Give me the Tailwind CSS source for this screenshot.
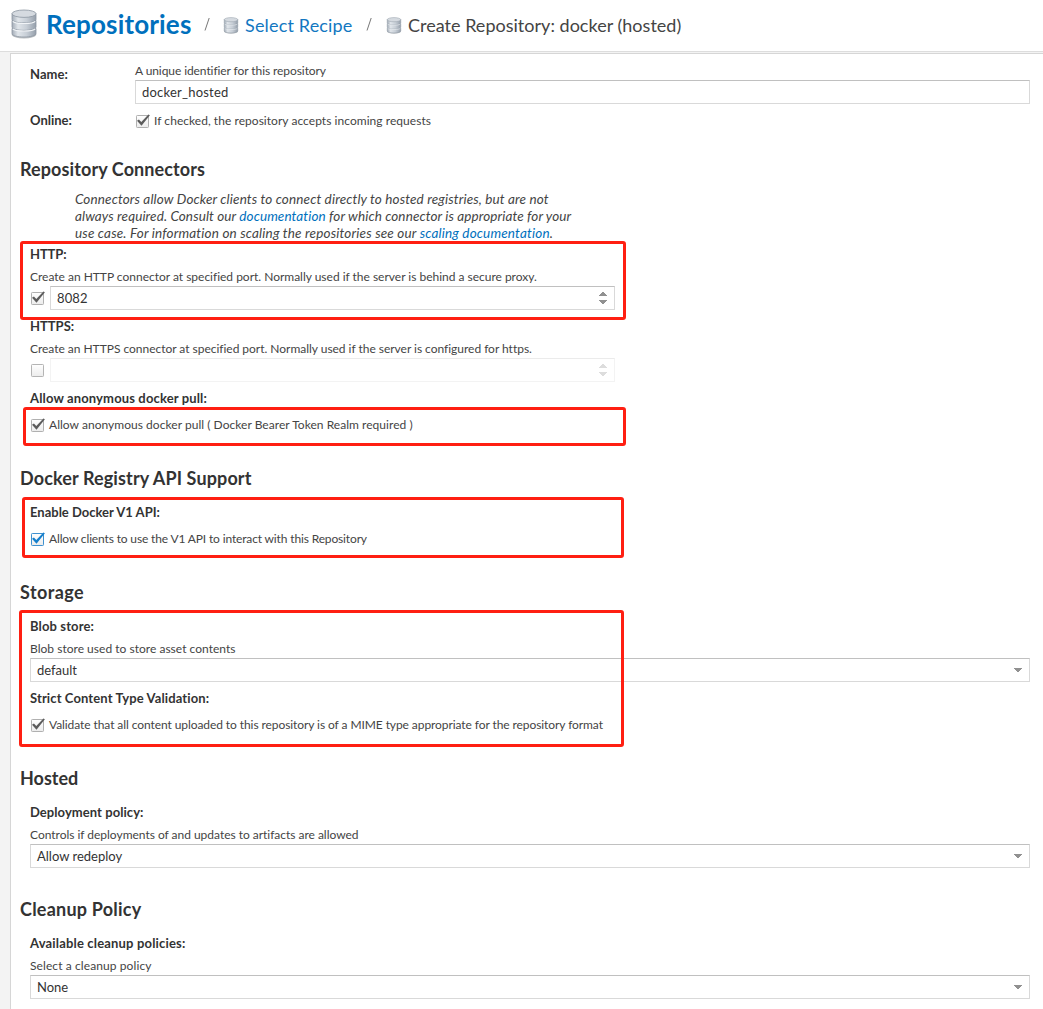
<!DOCTYPE html>
<html lang="en">
<head>
<meta charset="utf-8">
<title>Create Repository</title>
<script src="https://cdn.jsdelivr.net/npm/@tailwindcss/browser@4"></script>
</head>
<body class="h-[1009px] overflow-hidden bg-[#f3f3f3] font-[Lato,sans-serif] text-[13px] text-[#333] whitespace-nowrap">
<svg class="absolute size-0" aria-hidden="true">
  <defs>
    <linearGradient id="metal" x1="0" x2="1" y1="0" y2="0"><stop offset="0" stop-color="#a3acb7"/><stop offset=".25" stop-color="#e0e5ea"/><stop offset=".6" stop-color="#c8cfd7"/><stop offset="1" stop-color="#959fab"/></linearGradient>
    <linearGradient id="box" x1="0" x2="0" y1="0" y2="1"><stop offset="0" stop-color="#fff"/><stop offset="1" stop-color="#ececec"/></linearGradient>
    <symbol id="db" viewBox="0 0 26 30">
      <ellipse cx="13" cy="25.5" rx="12.3" ry="4" fill="#777f88" opacity=".5"/>
      <g fill="url(#metal)" stroke="#8c96a1" stroke-width=".8">
        <path d="M1 19.5v5C1 29.200 25 29.200 25 24.500v-5z"/>
        <path d="M1 11.500v6.500C1 22.500 25 22.500 25 18v-6.500z"/>
        <path d="M1 4.500v6C1 15 25 15 25 10.500v-6z"/>
        <ellipse cx="13" cy="4.700" rx="12" ry="3.700" fill="#d5dae0"/>
      </g>
      <path d="M1.800 12.300C4 15.200 22 15.200 24.200 12.300M1.800 19.900C4 22.800 22 22.800 24.200 19.900" fill="none" stroke="#f1f4f7" stroke-width="1.100"/>
    </symbol>
    <symbol id="unchecked" viewBox="0 0 15 15"><rect x="1.500" y="1.500" width="12" height="12" rx=".8" fill="url(#box)" stroke="#b4b4b4"/></symbol>
    <symbol id="checked" viewBox="0 0 15 15"><rect x="1.500" y="1.500" width="12" height="12" rx=".8" fill="url(#box)" stroke="#b0b0b0"/><path d="M2 6.800 3.900 5.400 6.300 7.900 13.400.600 14.900 1.200 6.500 11.700z" fill="#5c5c5c"/></symbol>
    <symbol id="checked-focus" viewBox="0 0 15 15"><rect x="1.500" y="1.500" width="12" height="12" rx=".8" fill="url(#box)" stroke="#3e91d0"/><path d="M2 6.800 3.900 5.400 6.300 7.900 13.400.600 14.900 1.200 6.500 11.700z" fill="#157fcc"/></symbol>
    <symbol id="down" viewBox="0 0 8 4"><path d="M0 0h8v1H7v1H6v1H5v1H3V3H2V2H1V1H0z" fill="#919191"/></symbol>
    <symbol id="spin" viewBox="0 0 8 12"><path d="M3 0h2v1h1v1h1v1h1v1H0V3h1V2h1V1h1zM0 8h8v1H7v1H6v1H5v1H3v-1H2v-1H1V9H0z" fill="#919191"/></symbol>
  </defs>
</svg>

<header class="flex h-[52px] items-center border-b border-[#ddd] bg-white pl-[11px]">
  <svg class="mt-[-3px] h-[30px] w-[26px] shrink-0"><use href="#db"/></svg>
  <h1 class="mt-[-4px] ml-[9px] w-[157px] text-[26px] leading-[48px] font-bold tracking-[0.16px] text-[#0070bd]">Repositories</h1>
  <svg class="mt-[-3px] h-4 w-[8px]" viewBox="0 0 8 16"><path d="M2 14.500 6.200 2" stroke="#777" fill="none"/></svg>
  <svg class="ml-[12px] h-[17px] w-[16px] shrink-0"><use href="#db"/></svg>
  <a class="ml-[6px] w-[119px] text-[18px] tracking-[0.17px] text-[#1277c1]">Select Recipe</a>
  <svg class="mt-[-3px] ml-[1px] h-4 w-[8px]" viewBox="0 0 8 16"><path d="M2 14.500 6.200 2" stroke="#777" fill="none"/></svg>
  <svg class="ml-[13px] h-[17px] w-[16px] shrink-0"><use href="#db"/></svg>
  <span class="ml-[6px] text-[18px] tracking-[0.02px] text-[#444]">Create Repository: docker (hosted)</span>
</header>

<main class="mt-px ml-[10px] flex h-[956px] flex-col border-t border-l border-[#d6d6d6] bg-white pt-[7px] pr-[13px] pl-[9px]">
  <div class="flex pl-[10px]">
    <div class="w-[105px] pt-[3px] leading-[20px] font-bold tracking-[0.08px]">Name:</div>
    <div class="flex-1">
      <div class="h-[19px] text-[12px] leading-[19px] tracking-[-0.08px] text-[#444]">A unique identifier for this repository</div>
      <div class="h-6 border border-[#d9d9d9] border-t-[#c0c0c0] bg-white pl-[6px] leading-[22px] tracking-[0.217px]">docker_hosted</div>
    </div>
  </div>
  <div class="mt-[5px] flex h-6 pl-[10px] leading-6">
    <div class="w-[105px] leading-[22px] font-bold">Online:</div>
    <div class="flex">
      <svg class="mt-[5px] size-[15px]"><use href="#checked"/></svg>
      <span class="ml-[4px] text-[12px] tracking-[0.045px] text-[#444]">If checked, the repository accepts incoming requests</span>
    </div>
  </div>

  <h2 class="mt-6 mb-[11px] h-6 text-[18px] leading-6 font-bold tracking-[0.1px]">Repository Connectors</h2>
  <div class="ml-[55px] h-[51px] text-[13.5px] leading-[17px] text-[#444] italic">
    <p class="-mt-px tracking-[0.135px]">Connectors allow Docker clients to connect directly to hosted registries, but are not</p>
    <p class="tracking-[0.105px]">always required. Consult our <a class="text-[#0070bd]">documentation</a> for which connector is appropriate for your</p>
    <p class="tracking-[0.17px]">use case. For information on scaling the repositories see our <a class="text-[#0070bd]">scaling documentation</a>.</p>
  </div>

  <section class="relative pl-[10px]">
    <div class="absolute top-[-2px] left-0 h-[79px] w-[606px] rounded-[3px] border-3 border-[#ff1f12]"></div>
    <div class="h-6 leading-[22px] font-bold tracking-[-0.1px]">HTTP:</div>
    <div class="h-[19px] text-[12px] leading-[20px] tracking-[-0.01px] text-[#444]">Create an HTTP connector at specified port. Normally used if the server is behind a secure proxy.</div>
    <div class="mb-[5px] flex h-6 w-[585px] items-center">
      <svg class="size-[15px]"><use href="#checked"/></svg>
      <div class="ml-[5px] flex h-6 flex-1 items-center justify-between border border-[#d9d9d9] border-t-[#c0c0c0] pr-[7px] pl-[6px]"><span class="pt-px leading-[21px] tracking-[0.085px]">8082</span><svg class="h-3 w-2"><use href="#spin"/></svg></div>
    </div>
  </section>
  <section class="pl-[10px]">
    <div class="h-6 leading-[22px] font-bold">HTTPS:</div>
    <div class="h-[19px] text-[12px] leading-[20px] tracking-[-0.025px] text-[#444]">Create an HTTPS connector at specified port. Normally used if the server is configured for https.</div>
    <div class="mb-[5px] flex h-6 w-[585px] items-center">
      <svg class="size-[15px]"><use href="#unchecked"/></svg>
      <div class="ml-[5px] flex h-6 flex-1 items-center justify-end border border-[#d9d9d9] border-t-[#c0c0c0] pr-[7px] opacity-30"><svg class="h-3 w-2"><use href="#spin"/></svg></div>
    </div>
  </section>
  <section class="relative pl-[10px]">
    <div class="absolute top-[20px] left-[3px] h-[39px] w-[603px] rounded-[3px] border-3 border-[#ff1f12]"></div>
    <div class="h-6 leading-[22px] font-bold tracking-[0.14px]">Allow anonymous docker pull:</div>
    <div class="mb-[3px] flex h-7 items-center"><svg class="size-[15px]"><use href="#checked"/></svg><span class="ml-[4px] text-[12px] tracking-[0.035px] text-[#444]">Allow anonymous docker pull ( Docker Bearer Token Realm required )</span></div>
  </section>

  <h2 class="mt-6 mb-[11px] h-6 text-[18px] leading-6 font-bold tracking-[0.12px]">Docker Registry API Support</h2>
  <section class="relative pl-[10px]">
    <div class="absolute top-[-4px] left-[2px] h-[61px] w-[602px] rounded-[3px] border-3 border-[#ff1f12]"></div>
    <div class="h-6 leading-[22px] font-bold">Enable Docker V1 API:</div>
    <div class="mb-[3px] flex h-7 items-center"><svg class="size-[15px]"><use href="#checked-focus"/></svg><span class="ml-[4px] text-[12px] tracking-[-0.145px] text-[#444]">Allow clients to use the V1 API to interact with this Repository</span></div>
  </section>

  <h2 class="mt-6 mb-[11px] h-6 text-[18px] leading-6 font-bold tracking-[0.4px]">Storage</h2>
  <section class="relative pl-[10px]">
    <div class="absolute top-[-5px] left-[-1px] h-[137px] w-[605px] rounded-[3px] border-3 border-[#ff1f12]"></div>
    <div class="h-6 leading-[22px] font-bold tracking-[0.127px]">Blob store:</div>
    <div class="h-[19px] text-[12px] leading-[20px] tracking-[0.023px] text-[#444]">Blob store used to store asset contents</div>
    <div class="mb-[5px] flex h-6 items-center justify-between border border-[#d9d9d9] border-t-[#c0c0c0] pr-[7px] pl-[6px]"><span class="pt-px leading-[21px]">default</span><svg class="h-1 w-2"><use href="#down"/></svg></div>
    <div class="h-6 leading-[22px] font-bold tracking-[0.11px]">Strict Content Type Validation:</div>
    <div class="mb-[3px] flex h-7 items-center"><svg class="size-[15px]"><use href="#checked"/></svg><span class="ml-[4px] text-[12px] tracking-[-0.08px] text-[#444]">Validate that all content uploaded to this repository is of a MIME type appropriate for the repository format</span></div>
  </section>

  <h2 class="mt-6 mb-[11px] h-6 text-[18px] leading-6 font-bold">Hosted</h2>
  <section class="pl-[10px]">
    <div class="h-6 leading-[22px] font-bold tracking-[0.063px]">Deployment policy:</div>
    <div class="h-[19px] text-[12px] leading-[20px] tracking-[-0.02px] text-[#444]">Controls if deployments of and updates to artifacts are allowed</div>
    <div class="mb-[5px] flex h-6 items-center justify-between border border-[#d9d9d9] border-t-[#c0c0c0] pr-[7px] pl-[6px]"><span class="pt-px leading-[21px]">Allow redeploy</span><svg class="h-1 w-2"><use href="#down"/></svg></div>
  </section>

  <h2 class="mt-6 mb-[11px] h-6 text-[18px] leading-6 font-bold tracking-[0.22px]">Cleanup Policy</h2>
  <section class="pl-[10px]">
    <div class="h-6 leading-[22px] font-bold tracking-[0.173px]">Available cleanup policies:</div>
    <div class="h-[19px] text-[12px] leading-[20px] tracking-[0.095px] text-[#444]">Select a cleanup policy</div>
    <div class="flex h-6 items-center justify-between border border-[#d9d9d9] border-t-[#c0c0c0] pr-[7px] pl-[6px]"><span class="pt-px leading-[21px]">None</span><svg class="h-1 w-2"><use href="#down"/></svg></div>
  </section>
</main>
</body>
</html>
